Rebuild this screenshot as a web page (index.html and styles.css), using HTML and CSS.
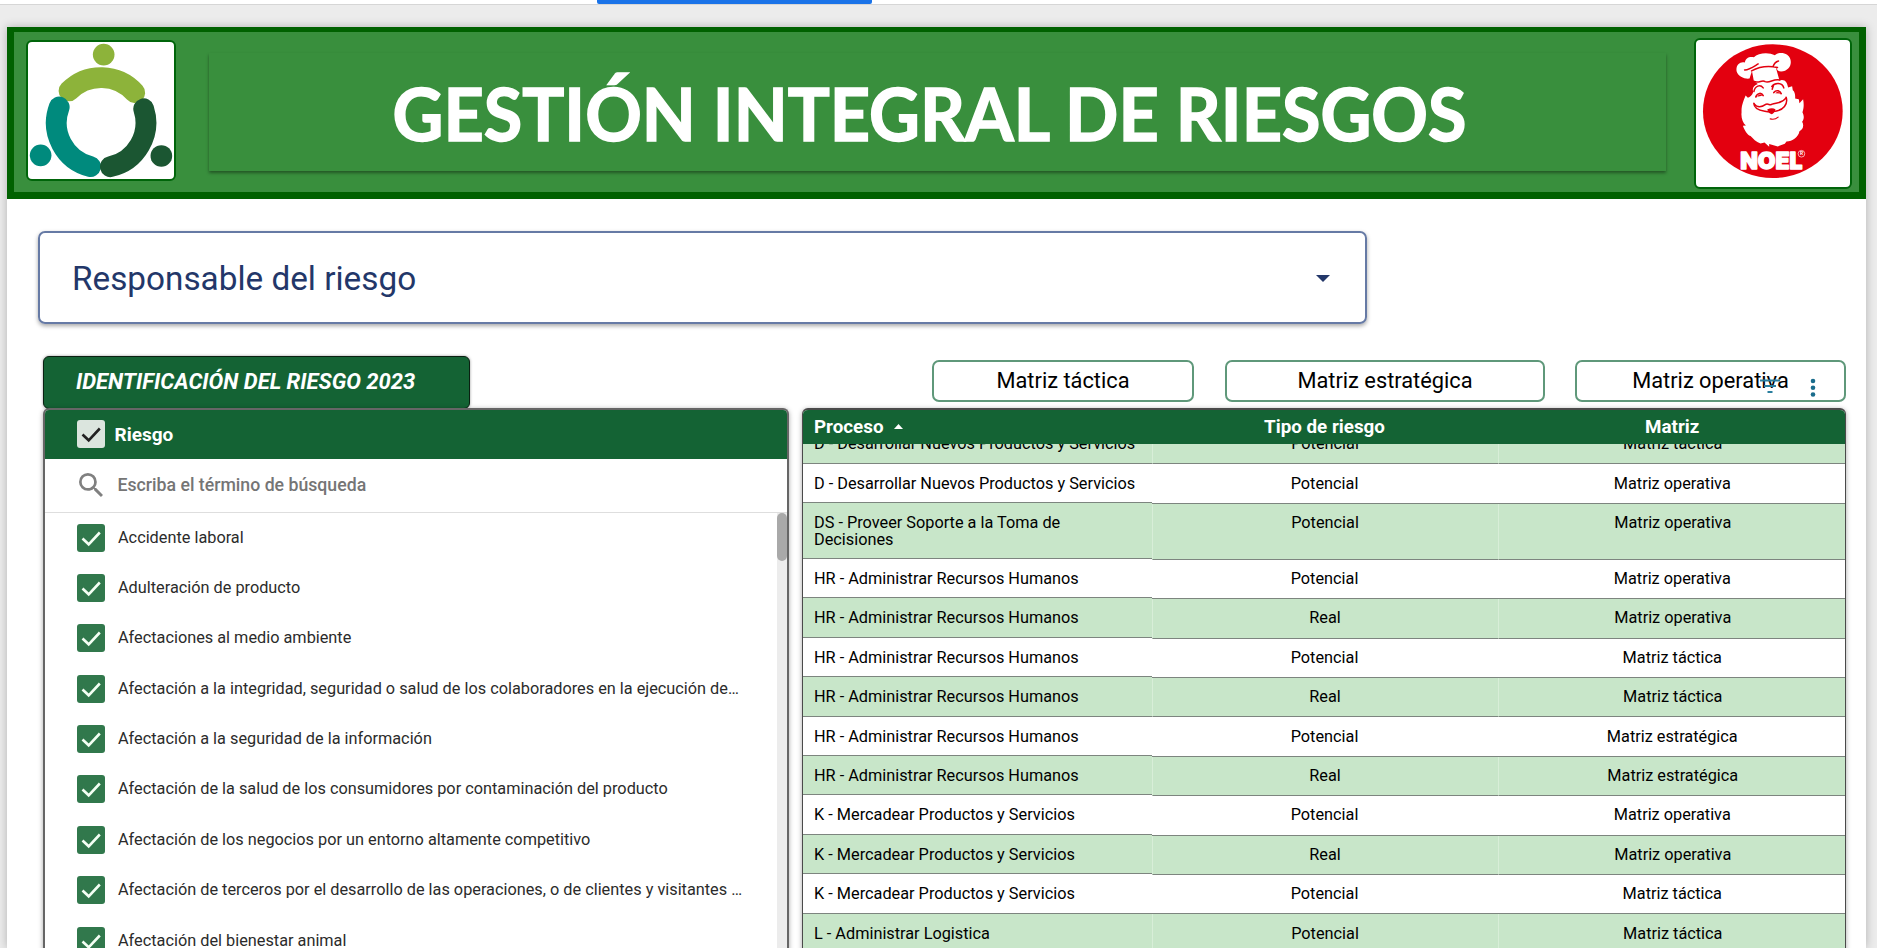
FILE: index.html
```html
<!DOCTYPE html>
<html lang="es">
<head>
<meta charset="utf-8">
<title>Gestión Integral de Riesgos</title>
<link rel="stylesheet" href="styles.css">
</head>
<body>
<svg class="defs" width="0" height="0">
  <symbol id="check" viewBox="0 0 28 28"><path d="M5.5 14.5 L11.7 20.3 L22.8 8.5" fill="none" stroke="currentColor" stroke-width="2.6"/></symbol>
</svg>
<nav class="tabs"><span class="tab-active"></span></nav>
<main class="sheet">
  <header class="banner">
    <div class="logo logo-people">
      <svg viewBox="27 41 147 138" fill="none" stroke-width="21" stroke-linecap="round">
        <path d="M68.3 90.3 A45.5 45.5 0 0 1 134.5 92" stroke="#8db33a"/>
        <path d="M58.4 106.5 A45.5 45.5 0 0 0 90 166.5" stroke="#008a7d"/>
        <path d="M143.5 108.3 A45.5 45.5 0 0 1 110 166.6" stroke="#1b5632"/>
        <circle cx="103.2" cy="53.7" r="10.9" fill="#8db33a"/>
        <circle cx="39.7" cy="155.2" r="10.9" fill="#008a7d"/>
        <circle cx="161.3" cy="155.8" r="10.9" fill="#1b5632"/>
      </svg>
    </div>
    <div class="title-box"><h1 class="title">GESTIÓN INTEGRAL DE RIESGOS</h1></div>
    <div class="logo logo-noel">
      <svg viewBox="18 15 463 440">
        <ellipse cx="249" cy="228" rx="210" ry="201" fill="#e3000f"/>
        <g fill="#fff">
          <path d="M186 108 L179 130 C164 132 145 124 140 108 C137 90 150 78 165 82 C166 68 180 62 192 66 C205 52 238 50 255 60 C262 52 280 50 292 58 C306 68 306 88 296 99 C288 108 272 112 264 106 L258 96 Z"/>
          <path d="M186 106 L257 93 L269 136 C272 134 279 133 284 136 C292 141 293 150 295 157 L307 153 L309 165 C315 169 317 180 316 190 L327 192 L329 204 L340 192 C343 208 342 220 338 231 C343 240 344 252 337 260 C343 270 341 282 329 288 C326 306 308 318 290 319 L285 326 L264 334 L238 327 L238 335 L224 322 L212 325 C198 321 190 311 182 303 C171 299 164 285 159 272 L168 271 C158 263 153 247 155 231 C154 210 163 192 167 181 L174 188 C181 184 187 181 190 170 C186 158 192 150 204 146 L192 138 Z"/>
        </g>
        <g fill="none" stroke="#e3000f" stroke-width="4.5" stroke-linecap="round" stroke-linejoin="round">
          <path d="M164 104 C177 105 193 93 205 86 M185 107 C209 94 240 92 263 97 M266 77 C256 80 252 87 250 93"/>
          <path d="M191 138 C207 146 216 132 226 139 C239 145 251 129 270 134"/>
          <path d="M192 169 C195 152 211 146 220 158 M246 154 C255 142 277 141 282 158 M251 151 L247 162"/>
          <path d="M198 185 C203 172 215 172 220 181 M252 172 C259 163 270 166 274 175" stroke-width="5"/>
          <path d="M193 206 C205 222 222 212 229 207 C237 205 240 212 247 207 C257 202 275 207 289 188"/>
          <path d="M192 204 C192 221 211 226 225 228 C249 234 275 226 284 214 C293 202 291 192 289 186"/>
          <path d="M241 251 C251 254 258 252 265 246" stroke-width="3.5"/>
        </g>
        <path d="M202 185 Q209 173 217 182 Z M256 174 Q265 166 272 175 Z M232 223 Q246 216 257 222 Q253 236 245 237 Q236 235 232 223 Z" fill="#e3000f"/>
        <text x="151" y="401" class="noel-word" textLength="187" lengthAdjust="spacingAndGlyphs">NOEL</text>
        <circle cx="335" cy="356" r="10" fill="#e3000f" stroke="#fff" stroke-width="2"/>
        <text x="335" y="361" class="noel-mark" text-anchor="middle">R</text>
      </svg>
    </div>
  </header>

  <div class="select"><span class="select-label">Responsable del riesgo</span><svg class="caret" viewBox="0 0 14 7"><path d="M0 0H14L7 7Z"/></svg></div>

  <div class="columns">
    <section class="left">
      <h2 class="section-tab"><span>IDENTIFICACIÓN DEL RIESGO 2023</span></h2>
      <div class="panel filter">
        <div class="filter-head"><svg class="box box-light"><use href="#check"/></svg><span>Riesgo</span></div>
        <div class="search"><svg class="lens" viewBox="3 3 17.5 17.5"><path d="M15.5 14h-.79l-.28-.27A6.471 6.471 0 0 0 16 9.500 6.500 6.500 0 1 0 9.500 16c1.610 0 3.090-.59 4.230-1.570l.27.28v.79l5 4.990L20.490 19l-4.990-5zm-6 0C7.010 14 5 11.990 5 9.500S7.010 5 9.500 5 14 7.010 14 9.500 11.990 14 9.500 14z"/></svg><span>Escriba el término de búsqueda</span></div>
        <div class="list-wrap">
          <ul class="list">
            <li><svg class="box"><use href="#check"/></svg><span>Accidente laboral</span></li>
            <li><svg class="box"><use href="#check"/></svg><span>Adulteración de producto</span></li>
            <li><svg class="box"><use href="#check"/></svg><span>Afectaciones al medio ambiente</span></li>
            <li><svg class="box"><use href="#check"/></svg><span>Afectación a la integridad, seguridad o salud de los colaboradores en la ejecución de…</span></li>
            <li><svg class="box"><use href="#check"/></svg><span>Afectación a la seguridad de la información</span></li>
            <li><svg class="box"><use href="#check"/></svg><span>Afectación de la salud de los consumidores por contaminación del producto</span></li>
            <li><svg class="box"><use href="#check"/></svg><span>Afectación de los negocios por un entorno altamente competitivo</span></li>
            <li><svg class="box"><use href="#check"/></svg><span>Afectación de terceros por el desarrollo de las operaciones, o de clientes y visitantes …</span></li>
            <li><svg class="box"><use href="#check"/></svg><span>Afectación del bienestar animal</span></li>
          </ul>
          <div class="track"><div class="thumb"></div></div>
        </div>
      </div>
    </section>

    <section class="right">
      <div class="buttons">
        <div class="btn btn-tactica">Matriz táctica</div>
        <div class="btn btn-estrategica">Matriz estratégica</div>
        <div class="btn btn-operativa">Matriz operativa
          <svg class="tools" viewBox="0 0 60 24"><path d="M3 5.500H23M7 11H19M10.500 17H15.500" stroke="#2a7f9e" stroke-width="2.200"/><g fill="#1a6c8c"><circle cx="56" cy="6" r="2.300"/><circle cx="56" cy="12.700" r="2.300"/><circle cx="56" cy="19.500" r="2.300"/></g></svg>
        </div>
      </div>
      <div class="panel table">
        <div class="thead"><span>Proceso <svg class="sort" viewBox="0 0 9 5"><path d="M0 5H9L4.500 0Z"/></svg></span><span>Tipo de riesgo</span><span>Matriz</span></div>
        <div class="tbody">
          <div class="row cut"><span>D - Desarrollar Nuevos Productos y Servicios</span><span>Potencial</span><span>Matriz táctica</span></div>
          <div class="row"><span>D - Desarrollar Nuevos Productos y Servicios</span><span>Potencial</span><span>Matriz operativa</span></div>
          <div class="row tall"><span>DS - Proveer Soporte a la Toma de<br>Decisiones</span><span>Potencial</span><span>Matriz operativa</span></div>
          <div class="row"><span>HR - Administrar Recursos Humanos</span><span>Potencial</span><span>Matriz operativa</span></div>
          <div class="row"><span>HR - Administrar Recursos Humanos</span><span>Real</span><span>Matriz operativa</span></div>
          <div class="row"><span>HR - Administrar Recursos Humanos</span><span>Potencial</span><span>Matriz táctica</span></div>
          <div class="row"><span>HR - Administrar Recursos Humanos</span><span>Real</span><span>Matriz táctica</span></div>
          <div class="row"><span>HR - Administrar Recursos Humanos</span><span>Potencial</span><span>Matriz estratégica</span></div>
          <div class="row"><span>HR - Administrar Recursos Humanos</span><span>Real</span><span>Matriz estratégica</span></div>
          <div class="row"><span>K - Mercadear Productos y Servicios</span><span>Potencial</span><span>Matriz operativa</span></div>
          <div class="row"><span>K - Mercadear Productos y Servicios</span><span>Real</span><span>Matriz operativa</span></div>
          <div class="row"><span>K - Mercadear Productos y Servicios</span><span>Potencial</span><span>Matriz táctica</span></div>
          <div class="row"><span>L - Administrar Logistica</span><span>Potencial</span><span>Matriz táctica</span></div>
        </div>
      </div>
    </section>
  </div>
</main>
</body>
</html>
```

FILE: styles.css
```css
* { box-sizing: border-box; }
html, body { height: 100%; }
body {
  margin: 0;
  overflow: hidden;
  display: flex;
  flex-direction: column;
  background: #ececec;
  font-family: Roboto, "Liberation Sans", sans-serif;
  color: #000;
}
.defs { position: absolute; }
svg { display: block; flex: none; }

.tabs { flex: none; height: 5px; background: #fff; border-bottom: 1px solid #d6d6d6; padding-left: 597px; }
.tab-active { display: block; width: 275px; height: 4px; background: #1a73e8; border-radius: 0 0 2px 2px; }

.sheet {
  flex: none;
  width: 1859px;
  height: 921px;
  margin: 22px 0 0 7px;
  background: #fff;
  box-shadow: 0 0 9px rgba(0, 0, 0, .25);
}

/* banner */
.banner {
  display: flex;
  align-items: flex-start;
  height: 171.500px;
  border: solid #006100;
  border-width: 5px 7px 7px;
  background: #398f3d;
}
.logo { flex: none; background: #fff; border: 2px solid #00650a; border-radius: 6px; overflow: hidden; }
.logo svg { width: 100%; height: 100%; }
.logo-people { width: 150px; height: 141px; margin: 8px 0 0 11.500px; }
.logo-noel { width: 158px; height: 151px; margin: 6px 0 0 27.500px; }
.title-box {
  flex: none;
  width: 1457px;
  height: 118px;
  margin: 21px 0 0 33.500px;
  display: flex;
  justify-content: center;
  box-shadow: 0 2px 3px rgba(0, 0, 0, .4);
  background: #398f3d;
}
.title {
  margin: 0;
  padding-right: 17px;
  font: 700 72px/121px Lato, sans-serif;
  color: #fff;
  white-space: nowrap;
  transform: scaleX(.974);
  -webkit-text-stroke: 1.500px #fff;
}
.noel-word { font: 900 71px Inter, sans-serif; fill: #fff; stroke: #fff; stroke-width: 4px; stroke-linejoin: round; }
.noel-mark { font: 700 14px Inter, sans-serif; fill: #fff; }

/* owner dropdown */
.select {
  display: flex;
  align-items: center;
  justify-content: space-between;
  width: 1329px;
  height: 93px;
  margin: 32.500px 0 0 31px;
  padding: 1px 35px 0 32px;
  border: 2px solid #667aa5;
  border-radius: 7px;
  box-shadow: 0 2px 4px rgba(0, 0, 0, .35);
  color: #233769;
}
.select-label { font-size: 33.300px; white-space: nowrap; }
.caret { width: 14px; height: 7px; fill: #233769; }

.columns { display: flex; align-items: flex-start; margin: 32px 0 0 35.500px; }
.left { width: 746px; }
.right { width: 1044.500px; margin-left: 13px; }

.section-tab {
  width: 427px;
  height: 53px;
  margin: 0;
  padding-left: 32.500px;
  background: #146334;
  border: 1.500px solid #0a2012;
  border-radius: 6px;
  color: #fff;
  font: italic 700 22px/49px Roboto, sans-serif;
  white-space: nowrap;
  box-shadow: 0 0 3px rgba(0, 0, 0, .4);
}
.panel { overflow: hidden; border-radius: 6px 6px 0 0; border: 2px solid #666; border-bottom: 0; background: #fff; box-shadow: 0 1px 5px rgba(0, 0, 0, .35); }
.filter { height: 560px; margin-top: -1px; }
.filter-head { display: flex; align-items: center; gap: 10px; height: 48.500px; padding: 0 0 0 32px; background: #146334; color: #fff; font-weight: 700; font-size: 19px; }
.box { width: 28px; height: 28px; border-radius: 3px; background: #31784c; color: #f4fff4; }
.box-light { background: #dbe5de; color: #222; }
.search { display: flex; align-items: center; height: 54px; padding: 0 0 1px 34px; border-bottom: 1px solid #dedede; color: #757575; font-size: 17.700px; font-weight: 500; }
.lens { width: 24px; height: 24px; margin-right: 15px; fill: #808080; }
.list-wrap { display: flex; justify-content: space-between; }
.list { list-style: none; margin: 0; padding: 0 0 0 32px; font-size: 16.300px; color: #2b2b2b; }
.list li { display: flex; align-items: center; gap: 13.500px; height: 50.370px; white-space: nowrap; }
.list span { padding-bottom: 1px; }
.track { width: 10px; background: #ececec; }
.thumb { height: 48px; border-radius: 5px; background: #a9a9a9; }

/* matrix buttons */
.buttons { display: flex; padding: 4px 0 0 130.500px; height: 52px; }
.btn { position: relative; height: 42px; border: 2px solid #5f987a; border-radius: 7px; text-align: center; font-size: 21.800px; line-height: 38px; white-space: nowrap; }
.btn-tactica { width: 262px; }
.btn-estrategica { width: 320px; margin-left: 31px; }
.btn-operativa { width: 271px; margin-left: 30px; }
.tools { position: absolute; left: 180px; top: 13px; width: 60px; height: 24px; }

/* process table */
.table { height: 560px; border-width: 2px 1px 0; border-color: #4a4a4a; }
.thead, .row { display: grid; grid-template-columns: 349px 346px 1fr; }
.thead { height: 34px; background: #146334; color: #fff; font-weight: 700; font-size: 18.800px; line-height: 34px; text-align: center; }
.thead span:first-child, .row span:first-child { text-align: left; padding-left: 11.500px; }
.thead span:last-child, .row span:last-child { padding-left: 2px; }
.sort { display: inline-block; width: 9px; height: 5px; margin: 0 0 4px 6px; fill: #fff; }
.tbody { overflow: hidden; }
.row { height: 39.420px; font-size: 16.300px; line-height: 17px; white-space: nowrap; text-align: center; }
.row span { padding-top: 11px; border-bottom: 1px solid #7d857f; }
.row span + span { position: relative; top: .7px; padding-top: 10.300px; }
.row:nth-child(odd) span { background: #c8e6c9; }
.row:nth-child(odd) span + span { border-left: 1px solid #d8eed8; }
.tall { height: 56px; }
.cut { margin-top: -19.800px; }
```
